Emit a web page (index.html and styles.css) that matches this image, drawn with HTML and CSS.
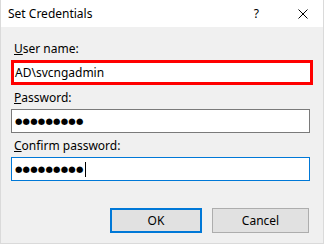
FILE: index.html
```html
<!DOCTYPE html>
<html lang="en">
<head>
  <meta charset="UTF-8" />
  <title>Set Credentials</title>
  <link rel="stylesheet" href="styles.css">
</head>
<body>
  <div class="window">
    <div class="titlebar">
      <span class="title">Set Credentials</span>
      <span class="help">?</span>
      <svg class="close" width="10" height="10" viewBox="0 0 10 10">
        <path d="M0.5 0.5 L9.5 9.5 M9.5 0.5 L0.5 9.5" stroke="#000" stroke-width="1" fill="none" />
      </svg>
    </div>

    <div class="content">
      <div class="field">
        <label><u>U</u>ser name:</label>
        <div class="input highlight">AD\svcngadmin</div>
      </div>

      <div class="field">
        <label><u>P</u>assword:</label>
        <div class="input"><span class="dots">●●●●●●●●●</span></div>
      </div>

      <div class="field">
        <label><u>C</u>onfirm password:</label>
        <div class="input focused"><span class="dots">●●●●●●●●●</span><span class="caret"></span></div>
      </div>

      <div class="buttons">
        <button class="default-btn">OK</button>
        <button>Cancel</button>
      </div>
    </div>
  </div>
</body>
</html>
```

FILE: styles.css
```css
body {
  margin: 0;
  font-family: 'Noto Sans', 'Liberation Sans', sans-serif;
  font-size: 12px;
  color: #000;
}

.window {
  width: 324px;
  height: 244px;
  box-sizing: border-box;
  border: 1px solid #dadada;
  border-top: none;
  display: flex;
  flex-direction: column;
  background: #f0f0f0;
}

.titlebar {
  height: 27px;
  flex: none;
  background: #fff;
  display: flex;
  align-items: center;
  padding-left: 7px;
}

.title {
  flex: 1;
  font-size: 12px;
}

.help {
  font-size: 12px;
  margin-right: 39px;
}

.close {
  margin-right: 15px;
}

.content {
  flex: 1;
  padding: 14px 0 0 10px;
}

.field {
  margin-bottom: 5px;
}

label {
  display: block;
  line-height: 15px;
  margin: 0 0 4px 3px;
}

.input {
  width: 299px;
  height: 24px;
  box-sizing: border-box;
  border: 1px solid #7a7a7a;
  background: #fff;
  padding-left: 3px;
  display: flex;
  align-items: center;
  line-height: 15px;
}

.input.highlight {
  width: 302px;
  height: 25px;
  border: 3px solid #ff0000;
  padding-left: 1px;
}

.input.focused {
  border-color: #0078d7;
}

.dots {
  font-family: 'DejaVu Sans', sans-serif;
  font-size: 8.5px;
  letter-spacing: 0.2px;
}

.caret {
  width: 1px;
  height: 15px;
  background: #000;
  margin-left: 1px;
}

.buttons {
  display: flex;
  justify-content: flex-end;
  gap: 10px;
  margin-top: 27px;
  padding-right: 14px;
}

button {
  width: 92px;
  height: 25px;
  box-sizing: border-box;
  background: #e1e1e1;
  border: 1px solid #adadad;
  font-family: inherit;
  font-size: 12px;
  color: #000;
  padding: 0;
}

button:last-child {
  width: 97px;
}

.default-btn {
  border: 2px solid #0078d7;
}
```
